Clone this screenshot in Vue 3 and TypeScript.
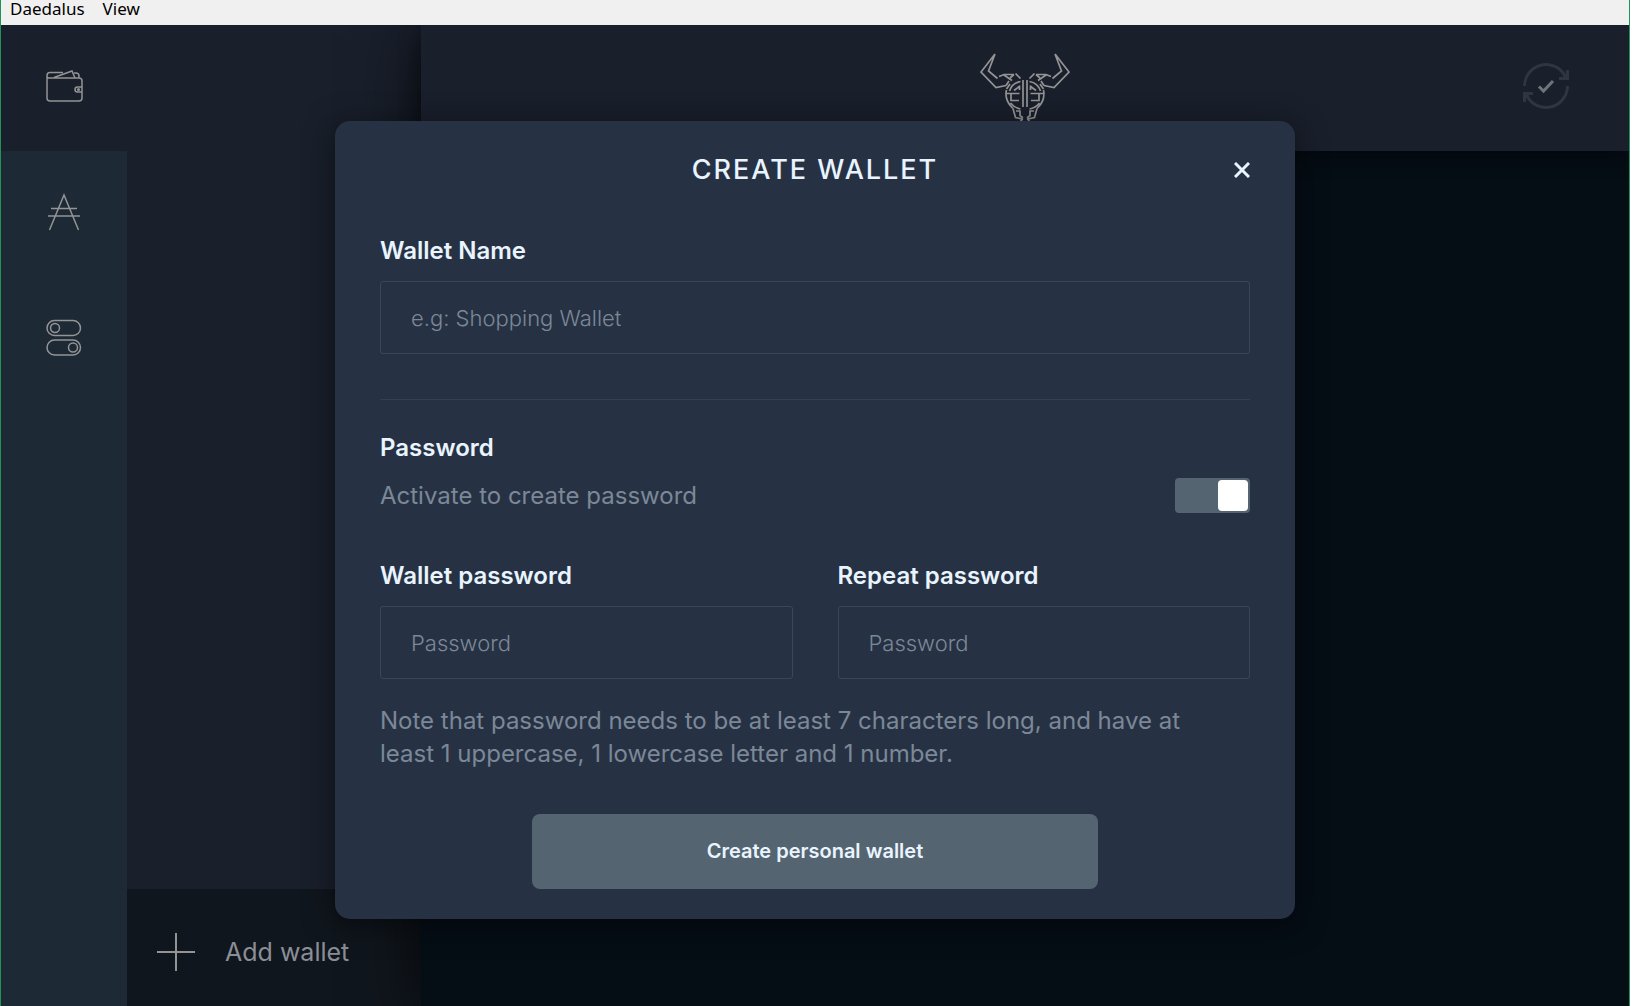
<script setup lang="ts">
import { ref } from 'vue'

const walletName = ref('')
const usePassword = ref(true)
const password = ref('')
const repeated = ref('')
</script>

<template>
  <div class="window">
    <nav class="menubar" aria-label="Menu">
      <a href="#">Daedalus</a>
      <a href="#">View</a>
    </nav>

    <div class="body">
      <nav class="rail" aria-label="Sections">
        <button type="button" class="rail-item active" aria-label="Wallets">
          <svg width="38" height="34" viewBox="0 0 38 34">
            <path d="M2 9H34a3 3 0 0 1 3 3V29a3 3 0 0 1-3 3H5a3 3 0 0 1-3-3V6.500a3 3 0 0 1 3-3H18M2 7a2 2 0 0 0 2 2M9 8.500L27 2l3 7M29 4h2a3 3 0 0 1 3 3v2M37 18H32.500a2.500 2.500 0 0 0 0 5H37" />
            <circle cx="33.500" cy="20.500" r=".8" />
          </svg>
        </button>
        <button type="button" class="rail-item" aria-label="Ada redemption">
          <svg width="34" height="38" viewBox="0 0 34 38">
            <path d="M2.500 37L17 2l14.500 35M4 15.500H30M1 23H33" />
          </svg>
        </button>
        <button type="button" class="rail-item" aria-label="Settings">
          <svg width="36" height="38" viewBox="0 0 36 38">
            <rect x="1" y="1.500" width="33.500" height="15" rx="7.500" />
            <circle cx="9" cy="9" r="4.500" />
            <rect x="1" y="21" width="33.500" height="15" rx="7.500" />
            <circle cx="27" cy="28.500" r="4.500" />
          </svg>
        </button>
      </nav>

      <aside class="wallets">
        <button type="button" class="add">
          <svg width="38" height="38" viewBox="0 0 38 38"><path d="M19 0V38M0 19H38" /></svg>
          <span>Add wallet</span>
        </button>
      </aside>

      <main class="main">
        <header class="topbar">
          <svg class="logo" width="90" height="72" viewBox="0 0 90 72" aria-label="Daedalus">
            <defs>
              <g id="half-bull">
                <path d="M15 1L1 19 16 34.500 26 32.500M15 1L8.500 18 17.500 25.500M19 23.500L24 21.500H34M24 22l8 5.500M30 25l4-3.500M35.500 20.500l5 5M26 32.500L29 28M26.500 36L30 31" />
                <path d="M43 27V54M40.500 28.500Q32 30 29.500 38M26.500 37Q25.500 40 26.500 45T33 55.500M26.500 40.500H39.500M31 41v6.500H39M30.500 50q4 5 10 6M40 33l-6 4.500M39.500 32.500V37" />
                <path d="M33 55.500l2.500 9 6.500 1.500M36 58h4.500M40 57.500v5l3 2.500M43 66q-3 1-2 5" />
              </g>
            </defs>
            <use href="#half-bull" />
            <use href="#half-bull" transform="matrix(-1 0 0 1 90 0)" />
          </svg>
          <svg class="sync" width="48" height="48" viewBox="0 0 48 48" aria-label="Synced">
            <path class="ring" d="M2.500 24A21.500 21.500 0 0 1 43 14M45.500 24A21.500 21.500 0 0 1 5 34" />
            <path class="tip" d="M44 8h3v10H37v-3h4l3-2zM1 40V30h10v3H7l-3 2v5z" />
            <path class="tick" d="M17 24.500l4.500 4.500 9.500-10" />
          </svg>
        </header>
      </main>

      <div class="overlay">
        <form class="dialog" role="dialog" aria-labelledby="dialog-title" @submit.prevent>
          <div class="dialog-head">
            <h1 id="dialog-title">CREATE WALLET</h1>
            <button type="button" class="close" aria-label="Close">
              <svg width="16" height="16" viewBox="0 0 16 16"><path d="M1 1l14 14M15 1L1 15" /></svg>
            </button>
          </div>

          <div class="field">
            <label for="wallet-name">Wallet Name</label>
            <input id="wallet-name" v-model="walletName" type="text" placeholder="e.g: Shopping Wallet">
          </div>

          <section class="password">
            <h2>Password</h2>
            <div class="switch-row">
              <label for="use-password">Activate to create password</label>
              <input id="use-password" v-model="usePassword" class="switch" type="checkbox">
            </div>
            <div class="pair">
              <div class="field">
                <label for="password">Wallet password</label>
                <input id="password" v-model="password" type="password" placeholder="Password">
              </div>
              <div class="field">
                <label for="repeat">Repeat password</label>
                <input id="repeat" v-model="repeated" type="password" placeholder="Password">
              </div>
            </div>
            <p>Note that password needs to be at least 7 characters long, and have at least 1 uppercase, 1 lowercase letter and 1 number.</p>
          </section>

          <button type="submit" class="submit">Create personal wallet</button>
        </form>
      </div>
    </div>
  </div>
</template>

<style>
body {
  margin: 0;
  background: #fff;
}
</style>

<style scoped>
* {
  box-sizing: border-box;
}

.window {
  display: flex;
  flex-direction: column;
  min-height: 100vh;
  margin-right: 3px;
  border: solid #22915a;
  border-width: 0 1px;
  font-family: Inter, "Liberation Sans", sans-serif;
}

button {
  padding: 0;
  border: 0;
  background: none;
  font: inherit;
}

svg {
  display: block;
  fill: none;
  stroke: #949494;
}

.menubar {
  display: flex;
  gap: 18px;
  height: 25px;
  padding-left: 9px;
  background: #f0f0f0;
  font: 17px/18px "Noto Sans", sans-serif;
}

.menubar a {
  color: #000;
  text-decoration: none;
}

.body {
  position: relative;
  display: flex;
  flex: 1;
  overflow: hidden;
  background: #050d15;
}

.rail {
  display: flex;
  flex-direction: column;
  width: 126px;
  background: #1e2936;
}

.rail-item {
  display: flex;
  align-items: center;
  justify-content: center;
  height: 126px;
  padding-bottom: 4px;
}

.rail-item.active {
  background: #191f2b;
}

.rail-item svg {
  stroke-width: 1.5;
}

.wallets {
  display: flex;
  flex-direction: column;
  justify-content: flex-end;
  width: 294px;
  background: #191f2b;
}

.add {
  display: flex;
  align-items: center;
  gap: 30px;
  height: 118px;
  padding: 8px 0 0 30px;
  border-top: 1px solid #18212a;
  background: #10161d;
  color: #8b8e96;
  font-size: 25px;
}

.add svg {
  stroke-width: 2;
}

.main {
  flex: 1;
  box-shadow: 0 10px 60px rgba(0, 0, 0, 0.7);
}

.topbar {
  display: flex;
  justify-content: center;
  position: relative;
  height: 126px;
  padding-top: 28px;
  background: #191f2b;
  box-shadow: 0 5px 20px rgba(0, 0, 0, 0.4);
}

.logo {
  stroke-width: 1.7;
}

.sync {
  position: absolute;
  top: 37px;
  right: 59px;
}

.ring {
  stroke: #303640;
  stroke-width: 3;
}

.tip {
  fill: #303640;
  stroke: none;
}

.tick {
  stroke: #70747a;
  stroke-width: 3;
}

.overlay {
  position: absolute;
  inset: 0;
  display: flex;
  align-items: center;
  justify-content: center;
  padding-top: 9px;
}

.dialog {
  display: flex;
  flex-direction: column;
  width: 960px;
  max-width: 100%;
  padding: 31px 45px 30px;
  border-radius: 15px;
  background: #263244;
  box-shadow: 0 5px 30px rgba(0, 0, 0, 0.5);
  color: #e9f4fe;
  font-size: 24px;
  line-height: 33px;
}

.dialog-head {
  display: grid;
  grid-template-columns: 1fr auto 1fr;
  align-items: center;
  margin-bottom: 46px;
}

h1 {
  grid-column: 2;
  margin: 0;
  font-size: 27px;
  font-weight: 500;
  line-height: 36px;
  letter-spacing: 2px;
}

h2 {
  margin: 0;
  font-size: 24px;
  font-weight: 600;
}

.close {
  justify-self: end;
}

.close svg {
  stroke: #e9f4fe;
  stroke-width: 3;
}

.field {
  display: flex;
  flex: 1;
  flex-direction: column;
  gap: 14px;
}

.field label {
  font-weight: 600;
}

.field input {
  width: 100%;
  height: 73px;
  padding: 0 30px;
  border: 1px solid #3b4758;
  border-radius: 3px;
  background: transparent;
  color: #e9f4fe;
  font: 300 22px/33px Inter, sans-serif;
}

.field input::placeholder {
  color: #7c8897;
}

.password {
  margin-top: 45px;
  padding-top: 31px;
  border-top: 1px solid #334050;
}

.switch-row {
  display: flex;
  align-items: center;
  justify-content: space-between;
  margin: 14px 0 46px;
  color: #7c8897;
}

.switch {
  display: flex;
  justify-content: flex-end;
  width: 75px;
  height: 35px;
  margin: 0;
  padding: 2px;
  border-radius: 4px;
  background: #546470;
  appearance: none;
}

.switch:not(:checked) {
  justify-content: flex-start;
}

.switch::before {
  width: 30px;
  border-radius: 4px;
  background: #fff;
  content: "";
}

.pair {
  display: flex;
  gap: 45px;
}

p {
  margin: 25px 0 0;
  padding-right: 30px;
  color: #7c8897;
}

.submit {
  align-self: center;
  width: 566px;
  max-width: 100%;
  height: 75px;
  margin-top: 44px;
  border-radius: 8px;
  background: #546470;
  color: #e9f4fe;
  font-size: 20px;
  font-weight: 600;
}
</style>
